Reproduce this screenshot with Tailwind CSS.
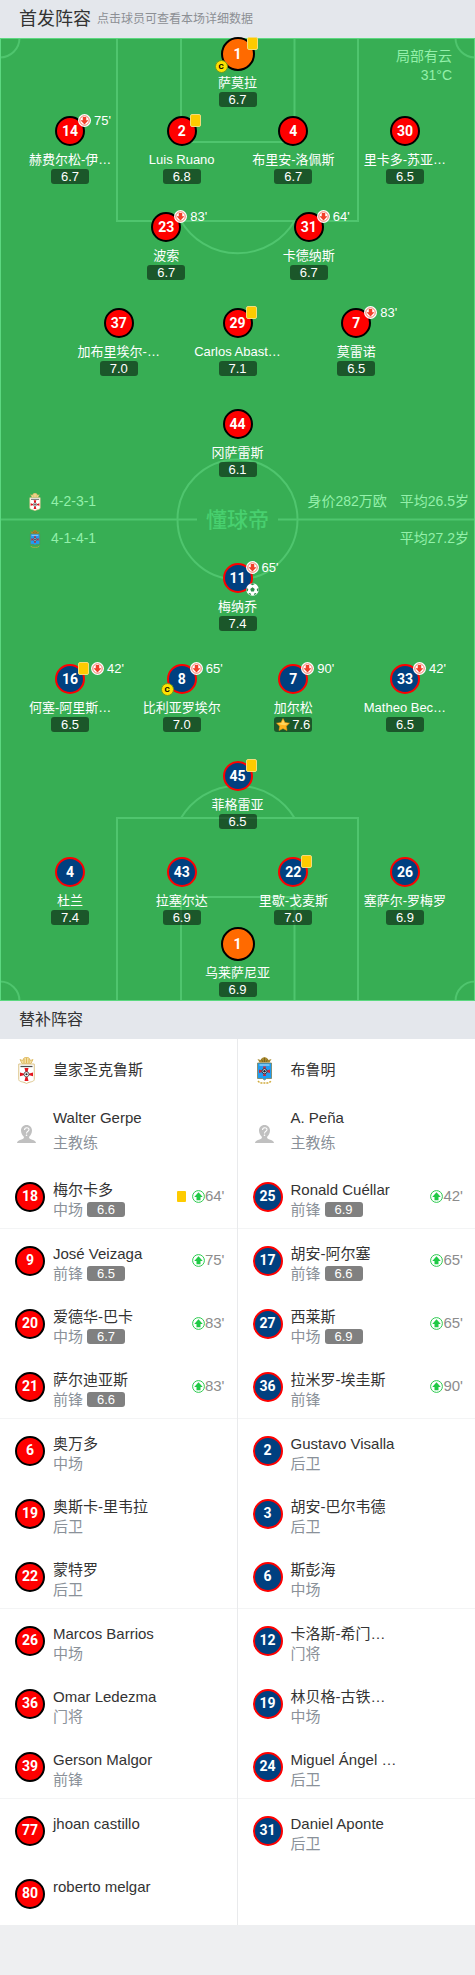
<!DOCTYPE html>
<html lang="zh-CN">
<head>
  <meta charset="UTF-8">
  <meta name="viewport" content="width=device-width, initial-scale=1.0">
  <title>首发阵容</title>
  <script src="https://cdn.jsdelivr.net/npm/@tailwindcss/browser@4"></script>
</head>
<body class="bg-[#eeeff1] font-['Liberation_Sans','Noto_Sans_CJK_SC',sans-serif] text-[#333]">

<!-- Shared icons -->
<svg class="hidden">
  <symbol id="icon-down" viewBox="0 0 26 26">
    <circle cx="13" cy="13" r="13" fill="#fff"/>
    <circle cx="13" cy="13" r="9.500" fill="none" stroke="#f0563c" stroke-width="1.600"/>
    <path d="M9.500 6h7v6.500H21L13 21l-8-8.500h4.500z" fill="#f2402a"/>
  </symbol>
  <symbol id="icon-up" viewBox="0 0 26 26">
    <circle cx="13" cy="13" r="11.800" fill="#fff" stroke="#2bca4e" stroke-width="2"/>
    <path d="M9 20.500h8v-6.500h4.500L13 4.500 4.500 14H9z" fill="#1fca45"/>
  </symbol>
  <symbol id="icon-ball" viewBox="0 0 26 26">
    <circle cx="13" cy="13" r="12.500" fill="#fff"/>
    <path d="M13 8.500l4.500 3.300-1.700 5.200h-5.600l-1.700-5.200zM8.500 2L13 4.500 17.500 2 13 .5zM1 10l3.500 2-1 5L1 15zM25 10l-3.500 2 1 5 2.500-2zM5 20l4 .5 1.500 4-4-2zM21 20l-4 .5-1.500 4 4-2z" fill="#2a8f49"/>
  </symbol>
  <symbol id="icon-star" viewBox="0 0 28 26">
    <path d="M14 1l4 8 9 1.300-6.500 6.200L22 25l-8-4-8 4 1.500-8.500L1 10.300 10 9z" fill="#ffb41f" stroke="#f59a12" stroke-width="1" stroke-linejoin="round"/>
    <path d="M14 3l3 7 8 1.200-7 3.300-8-1-7-2.500L11 10z" fill="#ffd65c"/>
  </symbol>
  <symbol id="icon-coach" viewBox="0 0 38 36">
    <path d="M19 0c7 0 11 5 11 11 0 6-3 10-6 13 0 4 4 4 8 6 3 1 6 3 6 6H0c0-3 3-5 6-6 4-2 8-2 8-6-3-3-6-7-6-13C8 5 12 0 19 0z" fill="#c0c0c0"/>
    <path d="M15 10c0-6 9-6 9-1 0 4-5 3-5 8" fill="none" stroke="#fff" stroke-width="2.200"/>
    <circle cx="19" cy="20.500" r="1.600" fill="#fff"/>
  </symbol>
  <symbol id="crest-home" viewBox="0 0 34 54">
    <path d="M8 13L4 5l5 2 3-5 5-2 5 2 3 5 5-2-4 8z" fill="#f2dfa6" stroke="#d9b04c" stroke-width="1.500"/>
    <path d="M12 12V4M17 12V1M22 12V4" stroke="#d9a93c" stroke-width="1.500"/>
    <path d="M1.500 14h31v31c0 5-9 4-15.500 8C10.500 49 1.500 50 1.500 45z" fill="#fff" stroke="#dcc489" stroke-width="2"/>
    <path d="M5 19h24" stroke="#4b4b4b" stroke-width="2.500"/>
    <path d="M13 22h8l-2 8h-4zM13 48h8l-2-8h-4zM4 31v7.500l9-2.500v-2.500zM30 31v7.500l-9-2.500v-2.500z" fill="#e3151f"/>
    <circle cx="17" cy="34.500" r="5" fill="#fff" stroke="#333" stroke-width="1.500"/>
    <circle cx="17" cy="34.500" r="2.200" fill="#222"/>
  </symbol>
  <symbol id="crest-away" viewBox="0 0 34 54">
    <path d="M7 11L3 4l6 2 3-4 5-2 5 2 3 4 6-2-4 7z" fill="#a8892f"/>
    <path d="M11 5l3 5M17 2v8M23 5l-3 5" stroke="#6d5a1b" stroke-width="1.500"/>
    <path d="M3 12h28v31H21l-4 3-4-3H3z" fill="#1f9df2" stroke="#7f7b4a" stroke-width="1.500"/>
    <path d="M7 16h20" stroke="#c6e7fb" stroke-width="2"/>
    <path d="M14 19h6l-1 6h-4zM14 38h6l-1-6h-4zM6 25v7l7-2v-3zM28 25v7l-7-2v-3z" fill="#c92a3d"/>
    <circle cx="17" cy="28.500" r="5" fill="#dfe7ee" stroke="#23364e" stroke-width="2"/>
    <circle cx="17" cy="28.500" r="2.400" fill="#1a2434"/>
    <path d="M4 48c4 5 9 4 13 4s9 1 13-4" fill="none" stroke="#d0ab3d" stroke-width="3" stroke-dasharray="4 2"/>
  </symbol>
</svg>

<header class="flex h-[38px] items-center gap-1.5 bg-[#e4e7ec] pl-[19px]">
  <h1 class="text-[18px]">首发阵容</h1>
  <span class="text-[12px] text-[#8c8f94]">点击球员可查看本场详细数据</span>
</header>

<section class="relative flex flex-col bg-[#37ae54] pb-1">
  <!-- Pitch markings -->
  <svg class="absolute inset-0 h-full w-full" viewBox="0 0 475 963" preserveAspectRatio="none" fill="none" stroke="#4fc56e" stroke-width="2">
    <path d="M117 0v183h241V0M181 0v104h113.500V0M181 183a66 66 0 0 0 113.500 0"/>
    <path d="M117 963V780h241v183M181 963V859h113.500v104M181 780a66 66 0 0 1 113.500 0"/>
    <path d="M0 19.500A19.500 19.500 0 0 0 19.500 0M455.500 0A19.500 19.500 0 0 0 475 19.500M0 943.500A19.500 19.500 0 0 1 19.500 963M455.500 963A19.500 19.500 0 0 1 475 943.500"/>
    <path d="M0 481.500h197M278 481.500h197"/>
    <circle cx="237.500" cy="481.500" r="60"/>
    <rect x="0.500" y="0.500" width="474" height="962" stroke="#5cd880" stroke-width="1"/>
  </svg>

  <div class="absolute top-[9px] right-[23px] text-right text-[14px] leading-[19px] text-[#93f0aa]">
    <p>局部有云</p>
    <p>31°C</p>
  </div>

  <div id="homeLineup" class="relative -mt-px"></div>

  <div class="relative my-1.5 text-[14px] text-[#93f0aa]">
    <div class="flex h-[37px] items-center pr-1.5 pl-[29px]">
      <svg class="h-[18px] w-3" role="img" aria-label="皇家圣克鲁斯"><use href="#crest-home"/></svg>
      <span class="ml-2.5">4-2-3-1</span>
      <span class="ml-auto">身价282万欧</span>
      <span class="ml-[13px]">平均26.5岁</span>
    </div>
    <div class="flex h-[37px] items-center pr-1.5 pl-[29px]">
      <svg class="h-[18px] w-3" role="img" aria-label="布鲁明"><use href="#crest-away"/></svg>
      <span class="ml-2.5">4-1-4-1</span>
      <span class="ml-auto">平均27.2岁</span>
    </div>
    <div class="absolute inset-0 flex items-center justify-center text-[21px] font-medium text-[#48d06f]">懂球帝</div>
  </div>

  <div id="awayLineup" class="relative"></div>
</section>

<h2 class="flex h-[38px] items-center bg-[#e4e7ec] pl-[19px] text-[16px]">替补阵容</h2>

<section class="grid grid-cols-2 bg-white">
  <ul id="homeBench" class="border-r border-[#e9eaec]"></ul>
  <ul id="awayBench"></ul>
</section>

<script>
  const kits = {
    home: 'bg-[#fe0000] border-black',
    away: 'bg-[#004080] border-[#fe0000]',
    keeper: 'bg-[#ff6a00] border-black',
  };

  // Each row: space above, width of one slot, players
  const homeRows = [
    { gap: '', slot: 'w-1/4', players: [{ n: 1, name: '萨莫拉', r: '6.7', gk: true, card: true, cap: true }] },
    { gap: 'mt-[9px]', slot: 'w-[23.5%]', players: [
      { n: 14, name: '赫费尔松-伊…', r: '6.7', off: 75 },
      { n: 2, name: 'Luis Ruano', r: '6.8', card: true },
      { n: 4, name: '布里安-洛佩斯', r: '6.7' },
      { n: 30, name: '里卡多-苏亚…', r: '6.5' } ] },
    { gap: 'mt-7', slot: 'w-[30%]', players: [
      { n: 23, name: '波索', r: '6.7', off: 83 },
      { n: 31, name: '卡德纳斯', r: '6.7', off: 64 } ] },
    { gap: 'mt-7', slot: 'w-1/4', players: [
      { n: 37, name: '加布里埃尔-…', r: '7.0' },
      { n: 29, name: 'Carlos Abast…', r: '7.1', card: true },
      { n: 7, name: '莫雷诺', r: '6.5', off: 83 } ] },
    { gap: 'mt-[33px]', slot: 'w-1/4', players: [{ n: 44, name: '冈萨雷斯', r: '6.1' }] },
  ];

  const awayRows = [
    { gap: '', slot: 'w-1/4', players: [{ n: 11, name: '梅纳乔', r: '7.4', off: 65, goal: true }] },
    { gap: 'mt-[33px]', slot: 'w-[23.5%]', players: [
      { n: 16, name: '何塞-阿里斯…', r: '6.5', card: true, off: 42 },
      { n: 8, name: '比利亚罗埃尔', r: '7.0', off: 65, cap: true },
      { n: 7, name: '加尔松', r: '7.6', off: 90, star: true },
      { n: 33, name: 'Matheo Bec…', r: '6.5', off: 42 } ] },
    { gap: 'mt-[29px]', slot: 'w-1/4', players: [{ n: 45, name: '菲格雷亚', r: '6.5', card: true }] },
    { gap: 'mt-7', slot: 'w-[23.5%]', players: [
      { n: 4, name: '杜兰', r: '7.4' },
      { n: 43, name: '拉塞尔达', r: '6.9' },
      { n: 22, name: '里歇-戈麦斯', r: '7.0', card: true },
      { n: 26, name: '塞萨尔-罗梅罗', r: '6.9' } ] },
    { gap: 'mt-0.5', slot: 'w-1/4', players: [{ n: 1, name: '乌莱萨尼亚', r: '6.9', gk: true }] },
  ];

  const starter = (p, side, slot) => `
    <a href="#" class="${slot} flex flex-col items-center text-white">
      <span class="relative flex ${p.gk ? 'size-[34px] mb-[3px]' : 'size-[30px] mb-[5px]'} items-center justify-center rounded-full border-2 ${p.gk ? kits.keeper : kits[side]}">
        <span class="font-[Roboto] text-[14px] font-bold">${p.n}</span>
        <span class="absolute -top-1 ${p.gk ? 'left-6 pt-0.5' : 'left-[21px]'} flex items-center gap-0.5">
          ${p.card ? '<i class="h-[13px] w-[11px] rounded-xs border border-[#f3dc7a] bg-[#fecb00]"></i>' : ''}
          ${p.off ? `<svg class="size-[13px]"><use href="#icon-down"/></svg><span class="ml-px text-[13px] leading-[13px]">${p.off}'</span>` : ''}
        </span>
        ${p.goal ? '<svg class="absolute top-[18px] left-[21px] size-[13px]"><use href="#icon-ball"/></svg>' : ''}
        ${p.cap ? '<span class="absolute -bottom-1 -left-2 flex size-[13px] items-center justify-center rounded-full border border-[#6f9a1e] bg-[#ffe100] font-[Roboto] text-[8px] leading-none font-bold text-black">C</span>' : ''}
      </span>
      <span class="text-[13px] leading-[18px] whitespace-nowrap">${p.name}</span>
      <span class="flex h-[15px] w-[38px] items-center justify-center gap-0.5 rounded-[3px] bg-black/50 text-[13px] leading-[15px]">
        ${p.star ? '<svg class="h-[13px] w-3.5"><use href="#icon-star"/></svg>' : ''}${p.r}
      </span>
    </a>`;

  const lineup = (rows, side) => rows.map(row => `
    <div class="${row.gap} flex justify-center">${row.players.map(p => starter(p, side, row.slot)).join('')}</div>`).join('');

  document.getElementById('homeLineup').innerHTML = lineup(homeRows, 'home');
  document.getElementById('awayLineup').innerHTML = lineup(awayRows, 'away');

  // Bench: number, name, position, rating, minute on, booked
  const homeBench = [
    [18, '梅尔卡多', '中场', '6.6', 64, true],
    [9, 'José Veizaga', '前锋', '6.5', 75],
    [20, '爱德华-巴卡', '中场', '6.7', 83],
    [21, '萨尔迪亚斯', '前锋', '6.6', 83],
    [6, '奥万多', '中场'],
    [19, '奥斯卡-里韦拉', '后卫'],
    [22, '蒙特罗', '后卫'],
    [26, 'Marcos Barrios', '中场'],
    [36, 'Omar Ledezma', '门将'],
    [39, 'Gerson Malgor', '前锋'],
    [77, 'jhoan castillo', ''],
    [80, 'roberto melgar', ''],
  ];
  const awayBench = [
    [25, 'Ronald Cuéllar', '前锋', '6.9', 42],
    [17, '胡安-阿尔塞', '前锋', '6.6', 65],
    [27, '西莱斯', '中场', '6.9', 65],
    [36, '拉米罗-埃圭斯', '前锋', '', 90],
    [2, 'Gustavo Visalla', '后卫'],
    [3, '胡安-巴尔韦德', '后卫'],
    [6, '斯彭海', '中场'],
    [12, '卡洛斯-希门…', '门将'],
    [19, '林贝格-古铁…', '中场'],
    [24, 'Miguel Ángel …', '后卫'],
    [31, 'Daniel Aponte', '后卫'],
  ];

  const substitute = ([n, name, pos, rating, on, card], i, side) => `
    <li class="${i % 3 === 0 ? 'h-16 border-b border-[#f3f4f5]' : 'h-[63px]'}">
      <a href="#" class="flex h-full items-center pr-3 pl-[15px]">
        <span class="flex size-[30px] shrink-0 items-center justify-center rounded-full border-2 ${kits[side]} font-[Roboto] text-[14px] font-bold text-white">${n}</span>
        <span class="ml-2 h-[46px] pt-1.5 text-[15px] leading-5 whitespace-nowrap">
          <span class="block">${name}</span>
          <span class="flex items-center gap-1 text-[#8a9199]">${pos}
            ${rating ? `<span class="h-[15px] w-[38px] rounded-[3px] bg-[#808080] text-center text-[13px] leading-[15px] text-white">${rating}</span>` : ''}
          </span>
        </span>
        <span class="ml-auto flex items-center text-[15px] text-[#8c8c8c]">
          ${card ? '<i class="mr-1.5 h-[11px] w-[9px] rounded-[1px] bg-[#fecb00]"></i>' : ''}
          ${on ? `<svg class="size-[13px]"><use href="#icon-up"/></svg>${on}'` : ''}
        </span>
      </a>
    </li>`;

  const bench = (team, coach, list, side) => `
    <li class="flex h-[63px] items-center pl-[15px] text-[15px]">
      <span class="flex w-[38px] shrink-0 pl-[3px]"><svg class="h-[27px] w-[17px]"><use href="#crest-${side}"/></svg></span>
      <span>${team}</span>
    </li>
    <li class="flex h-[63px] pl-[15px] text-[15px]">
      <span class="flex w-[38px] shrink-0 items-center pl-0.5"><svg class="h-[18px] w-[19px]"><use href="#icon-coach"/></svg></span>
      <span class="pt-[3px] leading-[25px]">
        <span class="block">${coach}</span>
        <span class="block text-[#8a9199]">主教练</span>
      </span>
    </li>
    ${list.map((p, i) => substitute(p, i, side)).join('')}`;

  document.getElementById('homeBench').innerHTML = bench('皇家圣克鲁斯', 'Walter Gerpe', homeBench, 'home');
  document.getElementById('awayBench').innerHTML = bench('布鲁明', 'A. Peña', awayBench, 'away');
</script>
</body>
</html>
